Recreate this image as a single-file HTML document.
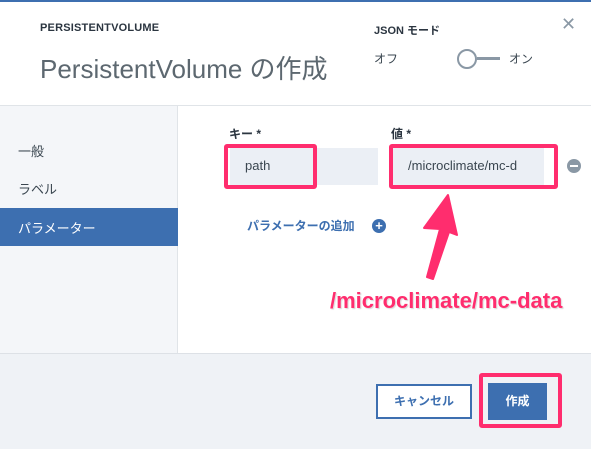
<!DOCTYPE html>
<html><head><meta charset="utf-8"><style>
*{margin:0;padding:0;box-sizing:border-box}
body{width:591px;height:449px;position:relative;overflow:hidden;background:#fff;font-family:"Liberation Sans","Noto Sans CJK JP",sans-serif;color:#3a4650}
.a{position:absolute;white-space:nowrap}
</style></head><body>
<div class="a" style="left:0;top:0;width:591px;height:2px;background:#3d6fb0"></div>
<div class="a" style="left:40px;top:22px;font-size:11px;font-weight:bold;color:#2b3540;letter-spacing:.2px">PERSISTENTVOLUME</div>
<div class="a" style="left:40px;top:49px;font-size:26px;color:#5d6870">PersistentVolume の作成</div>
<div class="a" style="left:374px;top:22px;font-size:11px;font-weight:bold;color:#2b3540">JSON モード</div>
<div class="a" style="left:374px;top:50px;font-size:12px;color:#3a4650">オフ</div>
<div class="a" style="left:457px;top:49px;width:20px;height:20px;border:2px solid #8a98a5;border-radius:50%"></div>
<div class="a" style="left:477px;top:57px;width:23px;height:3px;background:#8a98a5"></div>
<div class="a" style="left:509px;top:50px;font-size:12px;color:#3a4650">オン</div>
<div class="a" style="left:561px;top:14px;font-size:18px;color:#8a98a5">✕</div>
<div class="a" style="left:0;top:105px;width:591px;height:1px;background:#e0e4e8"></div>
<div class="a" style="left:0;top:106px;width:178px;height:247px;background:#f4f6f9;border-right:1px solid #e0e4e8"></div>
<div class="a" style="left:18px;top:141px;font-size:13px">一般</div>
<div class="a" style="left:18px;top:179px;font-size:13px">ラベル</div>
<div class="a" style="left:0;top:208px;width:178px;height:38px;background:#3d6fb0"></div>
<div class="a" style="left:18px;top:218px;font-size:13px;color:#fff">パラメーター</div>
<div class="a" style="left:229px;top:125px;font-size:12px;font-weight:bold;color:#2b3540">キー *</div>
<div class="a" style="left:391px;top:125px;font-size:12px;font-weight:bold;color:#2b3540">値 *</div>
<div class="a" style="left:230px;top:148px;width:148px;height:37px;background:#ebeff5"></div>
<div class="a" style="left:224px;top:144px;width:93px;height:45px;border:4px solid #ff2d6e;border-radius:3px"></div>
<div class="a" style="left:245px;top:158px;font-size:13px">path</div>
<div class="a" style="left:393px;top:148px;width:151px;height:37px;background:#ebeff5"></div>
<div class="a" style="left:389px;top:144px;width:169px;height:45px;border:4px solid #ff2d6e;border-radius:3px"></div>
<div class="a" style="left:408px;top:158px;font-size:13px">/microclimate/mc-d</div>
<div class="a" style="left:567px;top:159px;width:14px;height:14px;border-radius:50%;background:#8a98a5"></div>
<div class="a" style="left:570px;top:165px;width:8px;height:2px;background:#fff"></div>
<div class="a" style="left:247px;top:217px;font-size:12px;font-weight:bold;color:#3d6fb0">パラメーターの追加</div>
<div class="a" style="left:372px;top:219px;width:14px;height:14px;border-radius:50%;background:#3d6fb0;color:#fff;font-size:13px;font-weight:bold;line-height:14px;text-align:center">+</div>
<svg class="a" style="left:0;top:0" width="591" height="449"><path d="M448 195 L457 235 L449 232 L433 279 L427 277 L440 229 L424 228 Z" fill="#ff2d6e" stroke="#ff2d6e" stroke-width="2" stroke-linejoin="round"/></svg>
<div class="a" style="left:330px;top:288px;font-size:22px;font-weight:bold;color:#ff2d6e;text-shadow:0 0 2px #fff,1px 1px 1px #ccc">/microclimate/mc-data</div>
<div class="a" style="left:0;top:353px;width:591px;height:96px;background:#eff2f6;border-top:1px solid #dde1e6"></div>
<div class="a" style="left:376px;top:384px;width:96px;height:35px;border:2px solid #3d6fb0;background:#fff;font-size:12px;font-weight:bold;color:#3d6fb0;text-align:center;line-height:31px">キャンセル</div>
<div class="a" style="left:479px;top:373px;width:83px;height:55px;border:4px solid #ff2d6e;border-radius:3px"></div>
<div class="a" style="left:488px;top:383px;width:59px;height:37px;background:#3d6fb0;font-size:12px;font-weight:bold;color:#fff;text-align:center;line-height:37px">作成</div>
</body></html>
